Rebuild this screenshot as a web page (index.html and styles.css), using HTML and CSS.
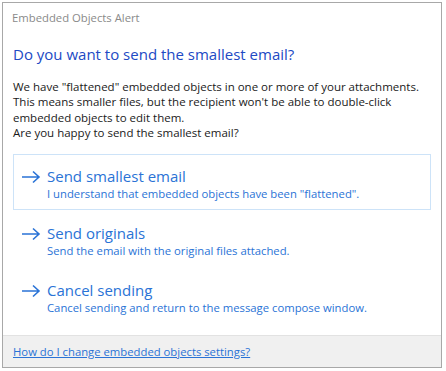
FILE: index.html
```html
<!DOCTYPE html>
<html lang="en">
<head>
<meta charset="UTF-8">
<title>Embedded Objects Alert</title>
<link rel="stylesheet" href="styles.css">
</head>
<body>

<div class="dialog">
  <div class="dialog-title">Embedded Objects Alert</div>

  <div class="dialog-body">
    <h1>Do you want to send the smallest email?</h1>
    <p class="message">
      We have "flattened" embedded objects in one or more of your attachments.<br>
      This means smaller files, but the recipient won't be able to double-click<br>
      embedded objects to edit them.<br>
      Are you happy to send the smallest email?
    </p>

    <div class="options">
      <a class="option selected" href="#">
        <svg class="arrow" width="20" height="14" viewBox="0 0 20 14"><path d="M1 7H18M12 1.5L18 7L12 12.5" fill="none" stroke="#2a73d6" stroke-width="1.6"/></svg>
        <span class="option-text">
          <span class="option-title">Send smallest email</span>
          <span class="option-sub">I understand that embedded objects have been "flattened".</span>
        </span>
      </a>
      <a class="option" href="#">
        <svg class="arrow" width="20" height="14" viewBox="0 0 20 14"><path d="M1 7H18M12 1.5L18 7L12 12.5" fill="none" stroke="#2a73d6" stroke-width="1.6"/></svg>
        <span class="option-text">
          <span class="option-title">Send originals</span>
          <span class="option-sub">Send the email with the original files attached.</span>
        </span>
      </a>
      <a class="option" href="#">
        <svg class="arrow" width="20" height="14" viewBox="0 0 20 14"><path d="M1 7H18M12 1.5L18 7L12 12.5" fill="none" stroke="#2a73d6" stroke-width="1.6"/></svg>
        <span class="option-text">
          <span class="option-title">Cancel sending</span>
          <span class="option-sub">Cancel sending and return to the message compose window.</span>
        </span>
      </a>
    </div>
  </div>

  <div class="dialog-footer">
    <a href="#">How do I change embedded objects settings?</a>
  </div>
</div>

</body>
</html>
```

FILE: styles.css
```css
body {
  margin: 0;
  background-color: #fff;
  font-family: "Open Sans", "Noto Sans", sans-serif;
  color: #1a1a1a;
}
.dialog {
  display: flex;
  flex-direction: column;
  width: 438px;
  height: 364px;
  margin: 2px 0 0 2px;
  border: 1px solid #a8a8a8;
  background-color: #fff;
}
.dialog-title {
  padding: 7px 9px 0;
  font-size: 11.3px;
  line-height: 16px;
  color: #8a8a8a;
}
.dialog-body {
  flex: 1;
  padding: 0 10px;
}
h1 {
  margin: 17px 0 0;
  font-size: 15px;
  line-height: 22px;
  font-weight: normal;
  color: #2149c4;
}
.message {
  margin: 14px 0 0;
  font-size: 11.5px;
  line-height: 15.3px;
  color: #1a1a1a;
}
.options {
  display: flex;
  flex-direction: column;
  gap: 1px;
  margin-top: 14px;
}
.option {
  display: flex;
  align-items: flex-start;
  height: 54px;
  padding: 0 6px;
  border: 1px solid transparent;
  text-decoration: none;
  color: #2a73d6;
}
.option.selected {
  border-color: #cde3f8;
}
.arrow {
  flex: none;
  margin: 15px 6px 0 1px;
}
.option-text {
  display: flex;
  flex-direction: column;
  padding-top: 11px;
}
.option-title {
  font-size: 15px;
  line-height: 20px;
}
.option-sub {
  font-size: 11.3px;
  line-height: 16px;
}
.dialog-footer {
  height: 31px;
  padding: 0 10px;
  border-top: 1px solid #e2e2e2;
  background-color: #f0f0f0;
  display: flex;
  align-items: center;
}
.dialog-footer a {
  font-size: 11.3px;
  color: #2a73d6;
}
```
